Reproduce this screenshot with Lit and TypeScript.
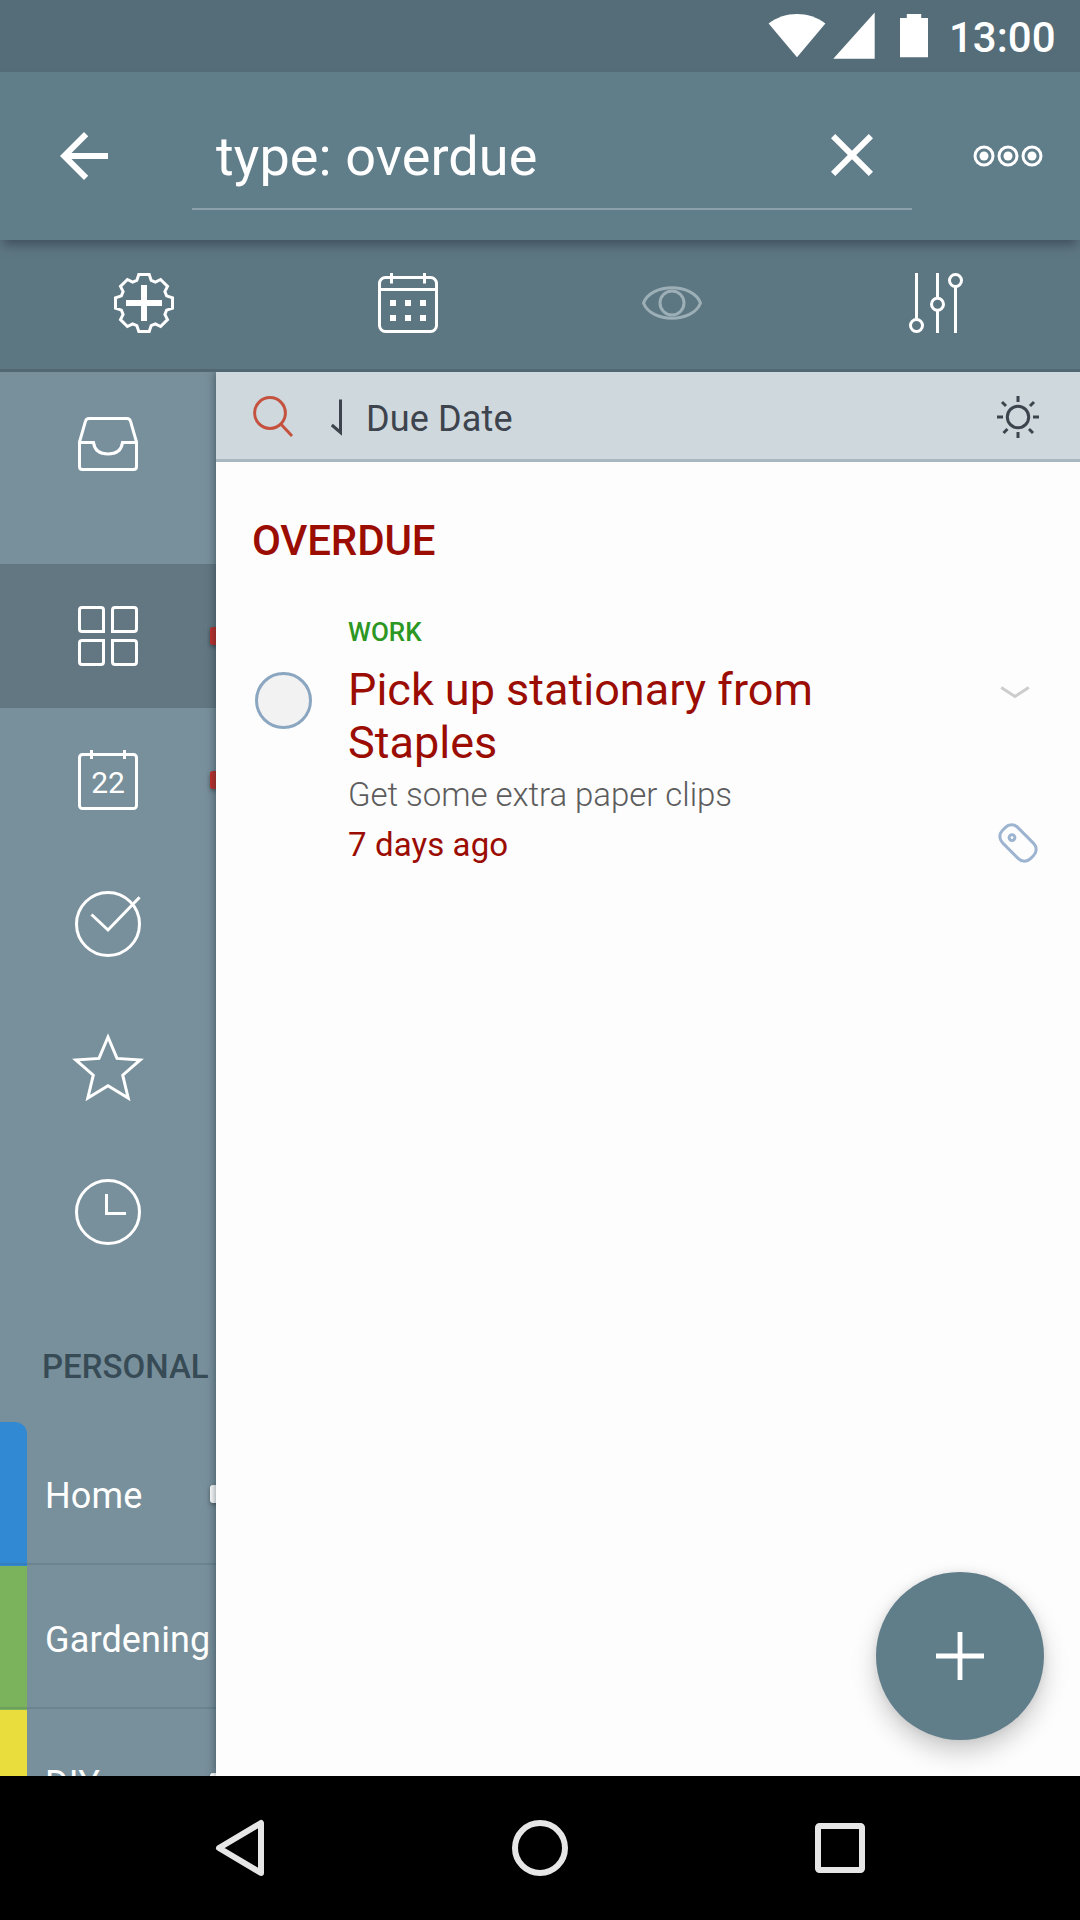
import { LitElement, html, css, svg, SVGTemplateResult } from "lit";
import { customElement, property } from "lit/decorators.js";
import { classMap } from "lit/directives/class-map.js";

/* Every glyph is drawn around the origin of a 72-unit box. */
const GEAR_OUTLINE =
  "M-5.2 -28.5H5.2L7.2 -22.6L11.4 -20.9L16.6 -23.5L23.5 -16.6L20.9 -11.4L22.6 -7.2L28.5 -5.2V5.2L22.6 7.2L20.9 11.4L23.5 16.6L16.6 23.5L11.4 20.9L7.2 22.6L5.2 28.5H-5.2L-7.2 22.6L-11.4 20.9L-16.6 23.5L-23.5 16.6L-20.9 11.4L-22.6 7.2L-28.5 5.2V-5.2L-22.6 -7.2L-20.9 -11.4L-23.5 -16.6L-16.6 -23.5L-11.4 -20.9L-7.2 -22.6Z";

const GLYPHS: Record<string, SVGTemplateResult> = {
  wifi: svg`<path class="solid" d="M-28.4 -12.5C-20 -19 -10 -22 0 -22S20 -19 28.4 -12.5L0 21.3Z"/>`,
  signal: svg`<path class="solid" d="M20.7 -23.5V22.7H-20.7Z"/>`,
  battery: svg`<path class="solid" d="M-7.2 -22H7.2V-18H14V21.2H-14V-18H-7.2Z"/>`,
  back: svg`<path class="solid" transform="translate(-36 -36) scale(3)" d="M20 11H7.83l5.59-5.59L12 4l-8 8 8 8 1.41-1.41L7.83 13H20z"/>`,
  close: svg`<path class="solid" transform="translate(-36 -36) scale(3)" d="M19 6.41L17.59 5 12 10.59 6.41 5 5 6.41 10.59 12 5 17.59 6.41 19 12 13.41 17.59 19 19 17.59 13.41 12z"/>`,
  more: svg`${[-24, 0, 24].map(
    (x) => svg`<circle cx=${x} r="9"/><circle class="solid" cx=${x} r="4.5"/>`
  )}`,
  gear: svg`<path d=${GEAR_OUTLINE}/><path stroke-width="6" d="M0 -18V18M-18 0H18"/>`,
  agenda: svg`<rect x="-28.5" y="-25.5" width="57" height="54" rx="6"/>
    <path d="M-28.5 -13.5H28.5M-16.5 -30V-19.5M16.5 -30V-19.5"/>
    <path class="solid" d="M-18 -3h6v6h-6zM-3 -3h6v6h-6zM12 -3h6v6h-6zM-18 12h6v6h-6zM-3 12h6v6h-6zM12 12h6v6h-6z"/>`,
  eye: svg`<path d="M-28.5 0C-21 -20.3 21 -20.3 28.5 0C21 20.3 -21 20.3 -28.5 0Z"/><circle r="12"/>`,
  sliders: svg`<path d="M-19.5 -30V16.5M1.5 -30V-4.7M1.5 7.3V30M19.5 -16.5V30"/>
    <circle cx="-19.5" cy="22.5" r="6"/><circle cx="1.5" cy="1.3" r="6"/><circle cx="19.5" cy="-22.5" r="6"/>`,
  inbox: svg`<path d="M-28.5 -2L-22.5 -22.8Q-21.8 -25.5 -19 -25.5H19Q21.8 -25.5 22.5 -22.8L28.5 -2V22.5Q28.5 25.5 25.5 25.5H-25.5Q-28.5 25.5 -28.5 22.5Z"/>
    <path d="M-28.5 -1.5H-14.5Q-13 10 0 10T14.5 -1.5H28.5"/>`,
  grid: svg`<path d="M-26 -28.5H-7Q-4.5 -28.5 -4.5 -26V-4.5H-26Q-28.5 -4.5 -28.5 -7V-26Q-28.5 -28.5 -26 -28.5Z"/>
    <path d="M7 -28.5H26Q28.5 -28.5 28.5 -26V-7Q28.5 -4.5 26 -4.5H4.5V-26Q4.5 -28.5 7 -28.5Z"/>
    <path d="M-26 4.5H-4.5V26Q-4.5 28.5 -7 28.5H-26Q-28.5 28.5 -28.5 26V7Q-28.5 4.5 -26 4.5Z"/>
    <path d="M4.5 4.5H26Q28.5 4.5 28.5 7V26Q28.5 28.5 26 28.5H7Q4.5 28.5 4.5 26Z"/>`,
  day: svg`<rect x="-28.5" y="-25.5" width="57" height="54" rx="3"/>
    <path d="M-16.5 -30V-21M16.5 -30V-21"/>
    <text y="13" text-anchor="middle">22</text>`,
  done: svg`<circle r="31.5"/><path d="M-16.5 -9.5L0 6L31.6 -26.7"/>`,
  star: svg`<path stroke-miterlimit="10" d="M0 -31L9 -9.6L32.2 -8L14.7 7.2L20.2 30L0 17.8L-20.2 30L-14.7 7.2L-32.2 -8L-9 -9.6Z"/>`,
  clock: svg`<circle r="31.5"/><path d="M-1.5 -18V1.5H18"/>`,
  search: svg`<circle cx="-3" cy="-4" r="15.4"/><path d="M7.8 7L19 19"/>`,
  sort: svg`<path d="M4.5 -17.5V15.5L-4.2 8"/>`,
  sun: svg`<circle r="10.7"/>
    <path d="M0 -21V-15M0 15V21M-21 0H-15M15 0H21M-16 -15L-12 -11M16 -15L12 -11M-14.5 16L-10.5 12M15 16L11 12"/>`,
  chevron: svg`<path stroke-width="3" d="M-13.8 -4.6L0 4.4L13.8 -4.6"/>`,
  tag: svg`<rect transform="rotate(45)" x="-19.9" y="-10.8" width="39.8" height="21.6" rx="8.6"/><circle cx="-6" cy="-5.4" r="2.9"/>`,
  plus: svg`<path stroke-width="4.8" d="M0 -24V24M-24 0H24"/>`,
  navBack: svg`<path stroke-width="6" stroke-linejoin="round" d="M21 -25V25L-21 0Z"/>`,
  navHome: svg`<circle r="25" stroke-width="6"/>`,
  navRecent: svg`<rect x="-22" y="-22" width="44" height="44" rx="1.5" stroke-width="6"/>`,
};

@customElement("ui-glyph")
export class UiGlyph extends LitElement {
  static styles = css`
    :host { display: block; width: 72px; height: 72px; flex: none; }
    .glyph { display: block; width: 100%; height: 100%; overflow: visible; fill: none; stroke: currentColor; stroke-width: 3; }
    .solid, text { fill: currentColor; stroke: none; }
    text { font: 400 30px Roboto, sans-serif; }
  `;
  @property() name = "";
  render() {
    return html`<svg class="glyph" viewBox="-36 -36 72 72">${GLYPHS[this.name]}</svg>`;
  }
}

interface Shortcut { icon: string; selected?: boolean; badge?: boolean; }
const SHORTCUTS: Shortcut[] = [
  { icon: "grid", selected: true, badge: true },
  { icon: "day", badge: true },
  { icon: "done" },
  { icon: "star" },
  { icon: "clock" },
];
const LISTS = [
  { name: "Home", tone: "blue", badge: true },
  { name: "Gardening", tone: "green", badge: false },
  { name: "DIY", tone: "yellow", badge: true },
];

@customElement("app-root")
export class AppRoot extends LitElement {
  static styles = css`
    :host { display: flex; flex-direction: column; width: 1080px; height: 1920px; overflow: hidden; background: #fdfdfd; font-family: Roboto, sans-serif; color: #fff; }
    * { box-sizing: border-box; }
    .status { height: 72px; flex: none; display: flex; justify-content: flex-end; align-items: center; padding-right: 24.5px; background: #546d78; }
    .wifi { margin-right: -15.5px; }
    .signal { margin-right: -12px; }
    .battery { margin-right: -1px; }
    .time { font-size: 42px; line-height: 50px; font-weight: 500; padding-top: 4px; }
    .appbar { height: 168px; flex: none; display: flex; align-items: center; padding: 0 36px 0 48px; background: #607d8a; position: relative; z-index: 3; box-shadow: 0 8px 10px -3px rgba(50, 60, 75, 0.65); }
    .field { width: 720px; height: 108px; margin: 30px 60px 0 72px; padding: 0 24px; display: flex; align-items: center; justify-content: space-between; border-bottom: 2px solid #8ba0aa; align-self: flex-start; }
    .query { font-size: 54px; line-height: 64px; letter-spacing: 0.1px; padding-top: 3px; }
    .close { margin-top: -1px; }
    .tools { height: 132px; flex: none; display: grid; grid-template-columns: repeat(4, 1fr); justify-items: center; align-items: center; padding: 0 12px 3px; border-bottom: 3px solid #516873; background: #5d7782; position: relative; z-index: 2; }
    .dim { color: #9dafb6; }
    .body { flex: 1; min-height: 0; display: flex; }
    .side { width: 216px; flex: none; overflow: hidden; background: #78909b; display: flex; flex-direction: column; }
    .cell { height: 144px; flex: none; display: flex; align-items: center; justify-content: center; position: relative; }
    .inbox { margin-bottom: 48px; }
    .selected { background: #627782; }
    .badge { position: absolute; left: 210px; top: 63px; width: 40px; height: 18px; border-radius: 3px; background: #bf2f2a; box-shadow: 0 2px 4px rgba(0, 0, 0, 0.35); }
    .pale { background: #fff; }
    .group { height: 138px; flex: none; padding: 63px 0 0 42px; font-size: 33px; line-height: 40px; font-weight: 500; color: #374b56; white-space: nowrap; }
    .list { height: 144px; flex: none; display: flex; position: relative; }
    .strip { width: 27px; flex: none; }
    .blue { background: #3289d3; border-top-right-radius: 12px; }
    .green { background: #7bb35c; }
    .yellow { background: #e9dc3d; }
    .label { flex: 1; padding: 4px 0 0 18px; font-size: 36px; line-height: 140px; letter-spacing: 0.15px; white-space: nowrap; }
    .rule { position: absolute; inset: auto 0 1px 0; height: 2px; background: rgba(50, 80, 95, 0.18); }
    .main { flex: 1; min-width: 0; display: flex; flex-direction: column; background: #fdfdfd; position: relative; z-index: 1; box-shadow: 0 0 9px rgba(20, 40, 50, 0.6); }
    .sorting { height: 90px; flex: none; display: flex; align-items: center; padding: 0 26px 0 21px; color: #3d444d; background: #cfd8dd; border-bottom: 3px solid #a9b8c0; }
    .search { color: #c5523f; margin-top: 2px; margin-right: -9px; }
    .sort { margin-right: -6px; margin-top: 3px; }
    .by { flex: 1; font-size: 36px; line-height: 42px; letter-spacing: 0.15px; padding-top: 7px; }
    .sun { margin-top: 3px; }
    .section { padding: 54px 0 0 36px; font-size: 42px; line-height: 50px; letter-spacing: -0.15px; font-weight: 500; color: #9b0d03; }
    .task { display: grid; grid-template-columns: 96px 1fr 72px; padding: 49px 27px 0 36px; }
    .check { width: 57px; height: 57px; margin: 57px 0 0 3px; border: 3px solid #8aa6c0; border-radius: 50%; background: #f2f2f2; }
    .text { color: #9b0d03; }
    .project { font-size: 26px; line-height: 32px; font-weight: 500; color: #2c9722; padding-top: 1px; }
    .title { font-size: 45px; line-height: 53px; margin-top: 15px; width: 600px; }
    .note { font-size: 33px; line-height: 40px; font-weight: 300; letter-spacing: -0.05px; color: #5c5c5c; margin-top: 6px; }
    .due { font-size: 33px; line-height: 40px; letter-spacing: 0.1px; margin-top: 10px; }
    .chevron { color: #cdcdcd; margin-top: 41px; margin-left: -2px; }
    .tag { color: #9db4d1; margin: 79px 0 0 0.7px; }
    .fab { position: absolute; right: 36px; bottom: 36px; width: 168px; height: 168px; border-radius: 50%; display: grid; place-items: center; background: #607d8a; box-shadow: 0 12px 24px rgba(0, 0, 0, 0.2), 0 0 8px rgba(0, 0, 0, 0.08); }
    .nav { height: 144px; flex: none; display: flex; justify-content: center; gap: 228px; align-items: center; color: #e6e6e6; background: #000; position: relative; z-index: 3; }
  `;

  render() {
    return html`
      <div class="status">
        <ui-glyph class="wifi" name="wifi"></ui-glyph>
        <ui-glyph class="signal" name="signal"></ui-glyph>
        <ui-glyph class="battery" name="battery"></ui-glyph>
        <span class="time">13:00</span>
      </div>
      <header class="appbar">
        <ui-glyph name="back"></ui-glyph>
        <div class="field">
          <span class="query">type: overdue</span>
          <ui-glyph class="close" name="close"></ui-glyph>
        </div>
        <ui-glyph name="more"></ui-glyph>
      </header>
      <div class="tools">
        <ui-glyph name="gear"></ui-glyph>
        <ui-glyph name="agenda"></ui-glyph>
        <ui-glyph class="dim" name="eye"></ui-glyph>
        <ui-glyph name="sliders"></ui-glyph>
      </div>
      <div class="body">
        <nav class="side">
          <div class="cell inbox"><ui-glyph name="inbox"></ui-glyph></div>
          ${SHORTCUTS.map(
            (s) => html`<div class=${classMap({ cell: true, selected: !!s.selected })}>
              <ui-glyph name=${s.icon}></ui-glyph>
              ${s.badge ? html`<span class="badge"></span>` : null}
            </div>`
          )}
          <div class="group">PERSONAL</div>
          ${LISTS.map(
            (l) => html`<div class="list">
              <span class=${classMap({ strip: true, [l.tone]: true })}></span>
              <span class="label">${l.name}</span>
              ${l.badge ? html`<span class="badge pale"></span>` : null}
              <span class="rule"></span>
            </div>`
          )}
        </nav>
        <main class="main">
          <div class="sorting">
            <ui-glyph class="search" name="search"></ui-glyph>
            <ui-glyph class="sort" name="sort"></ui-glyph>
            <span class="by">Due Date</span>
            <ui-glyph class="sun" name="sun"></ui-glyph>
          </div>
          <div class="section">OVERDUE</div>
          <article class="task">
            <div class="check"></div>
            <div class="text">
              <div class="project">WORK</div>
              <div class="title">Pick up stationary from Staples</div>
              <div class="note">Get some extra paper clips</div>
              <div class="due">7 days ago</div>
            </div>
            <div>
              <ui-glyph class="chevron" name="chevron"></ui-glyph>
              <ui-glyph class="tag" name="tag"></ui-glyph>
            </div>
          </article>
          <div class="fab"><ui-glyph name="plus"></ui-glyph></div>
        </main>
      </div>
      <div class="nav">
        <ui-glyph name="navBack"></ui-glyph>
        <ui-glyph name="navHome"></ui-glyph>
        <ui-glyph name="navRecent"></ui-glyph>
      </div>
    `;
  }
}
